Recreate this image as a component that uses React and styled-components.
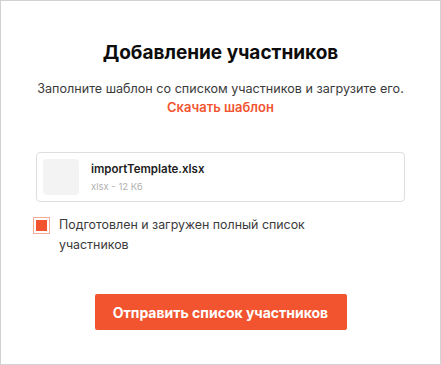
import React, { useState } from "react";
import styled, { createGlobalStyle } from "styled-components";

const GlobalStyle = createGlobalStyle`
  html, body {
    margin: 0;
    padding: 0;
    background: #fff;
  }
  body {
    font-family: "Inter", "Open Sans", "Liberation Sans", sans-serif;
  }
`;

const Card = styled.div`
  box-sizing: border-box;
  width: 441px;
  height: 365px;
  border: 1px solid #d2d2d2;
  padding: 40px 35px 0;
  display: flex;
  flex-direction: column;
  background: #fff;
`;

const Title = styled.h2`
  margin: 0;
  font-size: 19px;
  line-height: 24px;
  font-weight: 700;
  color: #0d0d0d;
  text-align: center;
`;

const Lead = styled.p`
  margin: 15px -20px 0;
  font-size: 12.6px;
  line-height: 18px;
  color: #3a3a3a;
  text-align: center;
  white-space: nowrap;
`;

const DownloadLink = styled.a`
  display: block;
  color: #f25430;
  font-weight: 600;
  font-size: 13px;
  text-decoration: none;
  cursor: pointer;
`;

const FileBox = styled.div`
  margin-top: 36px;
  height: 50px;
  box-sizing: border-box;
  border: 1px solid #dedede;
  border-radius: 4px;
  padding: 6px;
  display: flex;
  align-items: center;
  gap: 12px;
`;

const Thumb = styled.div`
  width: 36px;
  height: 36px;
  border-radius: 4px;
  background: #f3f3f3;
  flex-shrink: 0;
`;

const FileInfo = styled.div`
  display: flex;
  flex-direction: column;
  gap: 5px;
`;

const FileName = styled.span`
  font-size: 11.5px;
  line-height: 14px;
  font-weight: 600;
  color: #1c1c1c;
`;

const FileMeta = styled.span`
  font-size: 9.5px;
  line-height: 12px;
  color: #b0b0b0;
`;

const CheckRow = styled.label`
  margin-top: 13px;
  display: flex;
  align-items: flex-start;
  gap: 9px;
  cursor: pointer;
`;

const CheckBox = styled.span`
  box-sizing: border-box;
  margin: 2px 0 0 -3px;
  width: 17px;
  height: 17px;
  flex-shrink: 0;
  border: 1px solid #f6ab98;
  padding: 2px;
  background: #fff;
  &::after {
    content: "";
    display: block;
    width: 100%;
    height: 100%;
    background: ${(p) => (p.$checked ? "#f25430" : "transparent")};
  }
`;

const CheckText = styled.span`
  font-size: 12.4px;
  line-height: 20px;
  color: #3a3a3a;
`;

const SubmitButton = styled.button`
  align-self: center;
  margin-top: 39px;
  width: 252px;
  height: 36px;
  border: none;
  border-radius: 2px;
  background: #f25430;
  color: #fff;
  font-family: inherit;
  font-size: 14px;
  font-weight: 700;
  cursor: pointer;
`;

export default function App() {
  const [checked, setChecked] = useState(true);

  return (
    <>
      <GlobalStyle />
      <Card>
        <Title>Добавление участников</Title>
        <Lead>
          Заполните шаблон со списком участников и загрузите его.
          <DownloadLink>Скачать шаблон</DownloadLink>
        </Lead>

        <FileBox>
          <Thumb />
          <FileInfo>
            <FileName>importTemplate.xlsx</FileName>
            <FileMeta>xlsx - 12 Кб</FileMeta>
          </FileInfo>
        </FileBox>

        <CheckRow onClick={() => setChecked(!checked)}>
          <CheckBox $checked={checked} />
          <CheckText>
            Подготовлен и загружен полный список
            <br />
            участников
          </CheckText>
        </CheckRow>

        <SubmitButton>Отправить список участников</SubmitButton>
      </Card>
    </>
  );
}
